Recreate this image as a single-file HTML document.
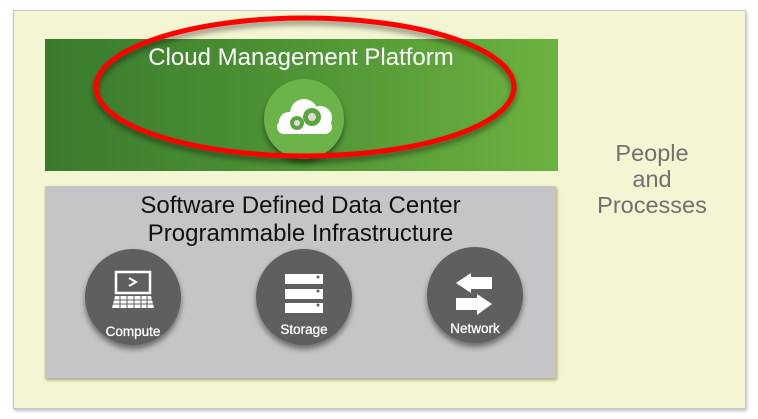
<!DOCTYPE html>
<html><head><meta charset="utf-8"><style>
body{margin:0;width:758px;height:419px;background:#fff;position:relative;overflow:hidden;font-family:"Liberation Sans",Arial,sans-serif}
.outer{position:absolute;left:13px;top:10px;width:733px;height:399px;background:#f4f5d2;border:1px solid #c8c8c0;box-shadow:1px 2px 3px rgba(0,0,0,.25);box-sizing:border-box}
.green{position:absolute;left:45px;top:39px;width:513px;height:132px;background:linear-gradient(90deg,#3a7a2e 0%,#4a8f33 40%,#6cb240 100%)}
.gray{position:absolute;left:45px;top:186px;width:511px;height:192px;background:#c5c5c7;box-shadow:1px 2px 3px rgba(90,90,40,.5)}
.t{position:absolute;white-space:nowrap;text-align:center}
</style></head><body>
<div class="outer"></div>
<div class="green"></div>
<div class="gray"></div>
<div class="t" style="left:0;width:602px;top:44px;color:#fff;font-size:24px;">Cloud Management Platform</div>
<div class="t" style="left:45px;width:511px;top:192px;color:#111;font-size:24px;line-height:28px">Software Defined Data Center<br>Programmable Infrastructure</div>
<div class="t" style="left:580px;width:144px;top:140px;color:#707070;font-size:23.5px;line-height:26px">People<br>and<br>Processes</div>
<svg width="758" height="419" style="position:absolute;left:0;top:0">
<defs>
<filter id="sh" x="-30%" y="-30%" width="160%" height="170%"><feDropShadow dx="0" dy="4" stdDeviation="3" flood-opacity="0.45"/></filter>
</defs>
<circle cx="304" cy="119" r="40" fill="#6cb44a" filter="url(#sh)"/>
<g fill="#fff">
<circle cx="289" cy="122" r="10"/><circle cx="304" cy="113" r="14"/><circle cx="320" cy="118" r="12"/>
<rect x="277" y="120" width="55" height="14" rx="7"/>
</g>
<g fill="#5fa53f"><circle cx="297" cy="123" r="7"/><circle cx="312" cy="117" r="9"/></g>
<g fill="#ddd"><circle cx="297" cy="123" r="3"/><circle cx="312" cy="117" r="4"/></g>
<g filter="url(#sh)" fill="#5f5f61">
<circle cx="133" cy="297" r="48"/><circle cx="304" cy="297" r="48"/><circle cx="475" cy="295" r="48"/>
</g>
<g fill="none" stroke="#fff" stroke-width="2.5"><rect x="116" y="272" width="34" height="21"/></g>
<path d="M129 278 L136 282 L129 286" fill="none" stroke="#fff" stroke-width="2"/>
<path d="M115 296 H151 L154 308 H112 Z" fill="#fff"/>
<g stroke="#5f5f61" stroke-width="1"><line x1="113" y1="300" x2="153" y2="300"/><line x1="113" y1="304" x2="153" y2="304"/>
<line x1="120" y1="296" x2="120" y2="308"/><line x1="127" y1="296" x2="127" y2="308"/><line x1="134" y1="296" x2="134" y2="308"/><line x1="141" y1="296" x2="141" y2="308"/><line x1="147" y1="296" x2="147" y2="308"/></g>
<g fill="#fff"><rect x="285" y="274" width="38" height="10"/><rect x="285" y="289" width="38" height="10"/><rect x="285" y="303" width="38" height="10"/></g>
<g fill="#5f5f61"><circle cx="318" cy="277" r="1.5"/><circle cx="318" cy="291" r="1.5"/><circle cx="318" cy="305" r="1.5"/></g>
<path d="M456 283 L471 273 V277 H492 V289 H471 V293 Z" fill="#fff"/>
<path d="M492 304 L477 294 V298 H456 V310 H477 V315 Z" fill="#fff"/>
<g fill="#fff" font-size="13.5" text-anchor="middle" font-family="Liberation Sans,Arial,sans-serif" stroke="#fff" stroke-width="0.3">
<text x="133" y="336">Compute</text><text x="304" y="334">Storage</text><text x="475" y="333">Network</text></g>
<ellipse cx="305" cy="87" rx="209" ry="69" fill="none" stroke="#ff0000" stroke-width="5" filter="url(#sh)"/>
</svg>
</body></html>
